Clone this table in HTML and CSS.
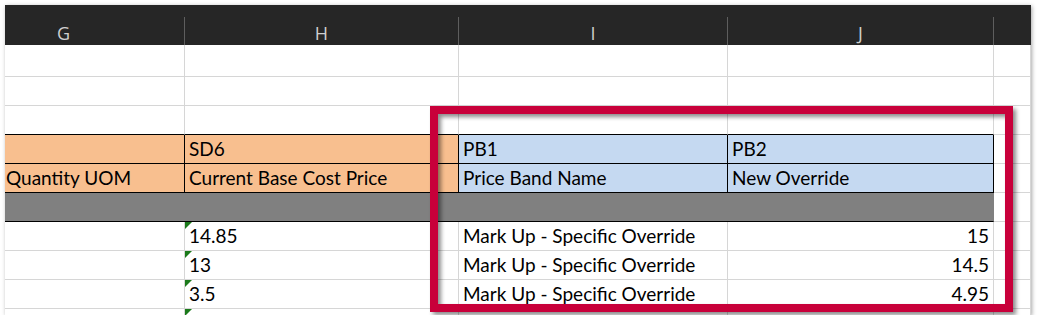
FILE: index.html
```html
<!DOCTYPE html>
<html>
<head>
<meta charset="utf-8">
<link rel="stylesheet" href="styles.css">
</head>
<body>
<div class="frame">
  <div class="sheet">
    <div class="colhead">
      <div class="ch ch-g">G</div>
      <div class="ch">H</div>
      <div class="ch">I</div>
      <div class="ch">J</div>
      <div class="ch ch-k"></div>
    </div>
    <div class="grid">
      <div class="c r1"></div><div class="c r1"></div><div class="c r1"></div><div class="c r1"></div><div class="c r1"></div>
      <div class="c"></div><div class="c"></div><div class="c"></div><div class="c"></div><div class="c"></div>
      <div class="c top"></div><div class="c top"></div><div class="c top"></div><div class="c top"></div><div class="c"></div>

      <div class="c or"></div><div class="c or">SD6</div><div class="c bl">PB1</div><div class="c bl">PB2</div><div class="c"></div>
      <div class="c or or-g">Quantity UOM</div><div class="c or">Current Base Cost Price</div><div class="c bl">Price Band Name</div><div class="c bl">New Override</div><div class="c"></div>

      <div class="c gr"></div><div class="c"></div>

      <div class="c"></div><div class="c num-txt">14.85</div><div class="c">Mark Up - Specific Override</div><div class="c right">15</div><div class="c"></div>
      <div class="c"></div><div class="c num-txt">13</div><div class="c">Mark Up - Specific Override</div><div class="c right">14.5</div><div class="c"></div>
      <div class="c"></div><div class="c num-txt">3.5</div><div class="c">Mark Up - Specific Override</div><div class="c right">4.95</div><div class="c"></div>
      <div class="c"></div><div class="c num-txt"></div><div class="c"></div><div class="c"></div><div class="c"></div>
    </div>
  </div>
  <div class="highlight"></div>
</div>
</body>
</html>
```

FILE: styles.css
```css
html, body {
  margin: 0;
  padding: 0;
  background: #ffffff;
}

.frame {
  position: relative;
  margin: 5px 0 0 5px;
  width: 1026px;
  height: 310px;
}

.sheet {
  width: 1026px;
  height: 310px;
  overflow: hidden;
  background: #ffffff;
  box-shadow: 1px 1px 4px rgba(0, 0, 0, 0.35);
}

.colhead {
  display: grid;
  grid-template-columns: 180px 274px 269px 266px 37px;
  height: 40px;
  box-sizing: border-box;
  padding-top: 12px;
  background: #262626;
}

.ch {
  border-right: 1px solid #5e5e5e;
  display: flex;
  align-items: flex-end;
  justify-content: center;
  padding-bottom: 3px;
  box-sizing: border-box;
  font-family: "Open Sans", "DejaVu Sans", sans-serif;
  font-size: 18px;
  line-height: 18px;
  color: #cfcfcf;
}

.ch-g {
  justify-content: flex-start;
  padding-left: 52px;
}

.ch-k {
  border-right: none;
}

.grid {
  display: grid;
  grid-template-columns: 180px 274px 269px 266px 37px;
  grid-template-rows: 32px repeat(9, 29px);
}

.c {
  position: relative;
  box-sizing: border-box;
  border-right: 1px solid #d6d6d6;
  border-bottom: 1px solid #d6d6d6;
  display: flex;
  align-items: flex-end;
  padding: 0 4px 5px 4px;
  font-family: Lato, "Open Sans", sans-serif;
  font-size: 19px;
  line-height: 19px;
  color: #000000;
  white-space: nowrap;
}

.top {
  border-bottom-color: #000000;
}

.or {
  background: #f8bf8f;
  border-right-color: #000000;
  border-bottom-color: #000000;
}

.or-g {
  padding-left: 1px;
}

.bl {
  background: #c5d9f1;
  border-right-color: #000000;
  border-bottom-color: #000000;
}

.gr {
  grid-column: span 4;
  background: #808080;
  border-right-color: #808080;
  border-bottom-color: #000000;
}

.right {
  justify-content: flex-end;
}

.num-txt::before {
  content: "";
  position: absolute;
  left: 0;
  top: 0;
  border-top: 7px solid #1b7a1b;
  border-right: 7px solid transparent;
}

.highlight {
  position: absolute;
  left: 425px;
  top: 101px;
  width: 583px;
  height: 206px;
  box-sizing: border-box;
  border: 8px solid #c8003a;
  filter: drop-shadow(3px 3px 2px rgba(0, 0, 0, 0.45));
}
```
